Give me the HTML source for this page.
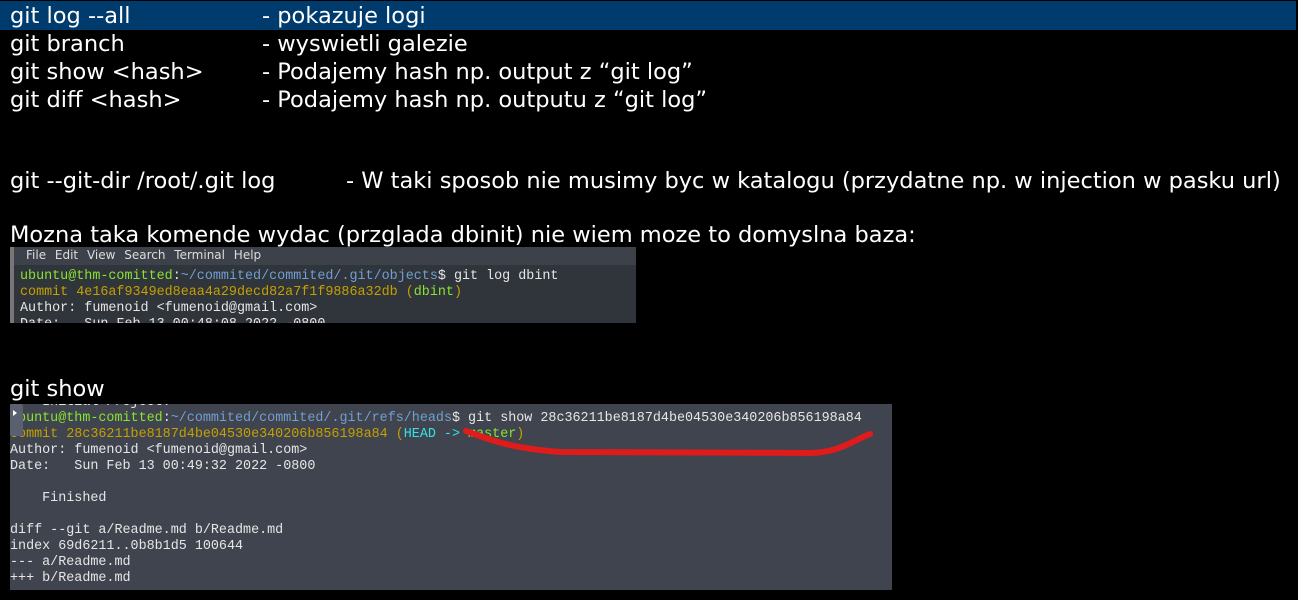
<!DOCTYPE html>
<html><head><meta charset="utf-8"><style>
body{margin:0;width:1298px;height:600px;background:#000;overflow:hidden;position:relative;font-family:"DejaVu Sans","Liberation Sans",sans-serif;color:#fff}
.t{position:absolute;left:10px;font-size:22.5px;line-height:28px;white-space:pre}
.hl{position:absolute;left:0;top:1px;width:1296px;height:29px;background:#003b6d}
.c2{position:absolute;left:252px}
.term{position:absolute;font-family:"Liberation Mono",monospace;font-size:13.4px;line-height:16px;white-space:pre;color:#e6e6e6;overflow:hidden}
.g{color:#8ae234}.b{color:#729fcf}.y{color:#c4a000}.cy{color:#34e2e2}
</style></head><body>
<div class="hl"></div>
<div class="t" style="top:2px">git log --all<span class="c2">- pokazuje logi</span></div>
<div class="t" style="top:30px">git branch<span class="c2">- wyswietli galezie</span></div>
<div class="t" style="top:58px">git show &lt;hash&gt;<span class="c2">- Podajemy hash np. output z “git log”</span></div>
<div class="t" style="top:86px">git diff &lt;hash&gt;<span class="c2">- Podajemy hash np. outputu z “git log”</span></div>
<div class="t" style="top:167px">git --git-dir /root/.git log<span style="position:absolute;left:336px">- W taki sposob nie musimy byc w katalogu (przydatne np. w injection w pasku url)</span></div>
<div class="t" style="top:221px">Mozna taka komende wydac (przglada dbinit) nie wiem moze to domyslna baza:</div>
<div class="term" style="left:10px;top:247px;width:626px;height:76px;background:#30343b"><div style="background:#3d4149;height:18px;line-height:16px;padding-left:16px;color:#ddd;font-family:'DejaVu Sans',sans-serif;font-size:12px;word-spacing:5px">File Edit View Search Terminal Help</div><div style="padding-left:10px;margin-top:4px"><span class="g">ubuntu@thm-comitted</span>:<span class="b">~/commited/commited/.git/objects</span>$ git log dbint
<span class="y">commit 4e16af9349ed8eaa4a29decd82a7f1f9886a32db (<span class="g">dbint</span>)</span>
Author: fumenoid &lt;fumenoid@gmail.com&gt;
Date:   Sun Feb 13 00:48:08 2022 -0800</div><div style="position:absolute;left:0;top:0;width:4px;height:76px;background:#777"></div></div>
<div class="t" style="top:375px">git show</div>
<div class="term" style="left:10px;top:404px;width:882px;height:186px;background:#40444e"><div style="margin-top:-9px">    Initial Project.
<span class="g">ubuntu@thm-comitted</span>:<span class="b">~/commited/commited/.git/refs/heads</span>$ git show 28c36211be8187d4be04530e340206b856198a84
<span class="y">commit 28c36211be8187d4be04530e340206b856198a84 (<span class="cy">HEAD -&gt; </span><span class="g">master</span>)</span>
Author: fumenoid &lt;fumenoid@gmail.com&gt;
Date:   Sun Feb 13 00:49:32 2022 -0800

    Finished

diff --git a/Readme.md b/Readme.md
index 69d6211..0b8b1d5 100644
--- a/Readme.md
+++ b/Readme.md</div><div style="position:absolute;left:0;top:0;width:13px;height:32px;background:#5a6070;border-radius:2px"></div><div style="position:absolute;left:3px;top:6px;width:0;height:0;border-left:4px solid #fff;border-top:3px solid transparent;border-bottom:3px solid transparent"></div></div>
<svg style="position:absolute;left:0;top:0" width="1298" height="600"><path d="M466 431 C490 440,510 448,560 452 L810 453 C840 452,850 442,870 434" stroke="#e01b1b" stroke-width="6" fill="none" stroke-linecap="round"/></svg>
</body></html>
